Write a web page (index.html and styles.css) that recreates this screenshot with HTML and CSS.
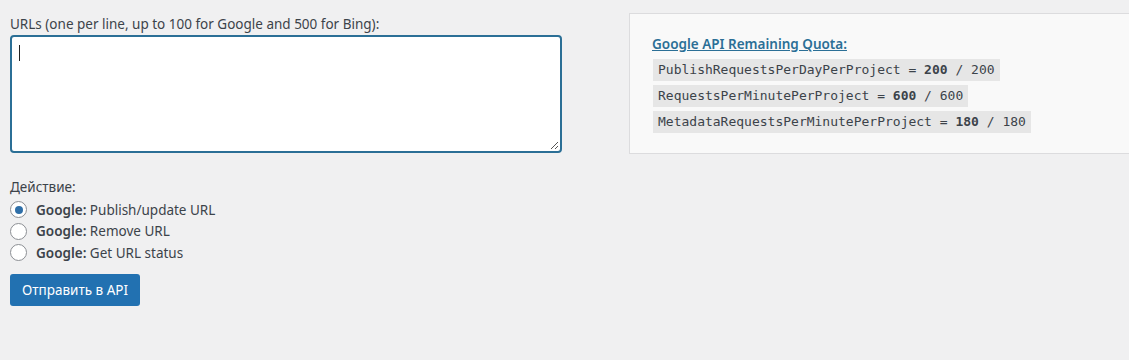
FILE: index.html
```html
<!DOCTYPE html>
<html>
<head>
<meta charset="utf-8">
<link rel="stylesheet" href="styles.css">
</head>
<body>
<div class="wrap">
  <div class="main">
    <label class="lbl" for="urls">URLs (one per line, up to 100 for Google and 500 for Bing):</label>
    <div class="ta-wrap">
      <textarea id="urls" class="urls"></textarea>
      <span class="caret"></span>
      <svg class="grip" width="9" height="9" viewBox="0 0 9 9"><path d="M8 1L1 8M8 5L5 8" stroke="#555" stroke-width="1"/></svg>
    </div>
    <div class="action">
      <div class="lbl">Действие:</div>
      <label class="radio"><span class="dot checked"></span><b>Google:</b>&nbsp;Publish/update URL</label>
      <label class="radio"><span class="dot"></span><b>Google:</b>&nbsp;Remove URL</label>
      <label class="radio"><span class="dot"></span><b>Google:</b>&nbsp;Get URL status</label>
    </div>
    <button class="btn">Отправить в API</button>
  </div>
  <div class="panel">
    <a class="quota" href="#">Google API Remaining Quota:</a>
    <code>PublishRequestsPerDayPerProject = <b>200</b> / 200</code>
    <code>RequestsPerMinutePerProject = <b>600</b> / 600</code>
    <code>MetadataRequestsPerMinutePerProject = <b>180</b> / 180</code>
  </div>
</div>
</body>
</html>
```
FILE: styles.css
```css
html, body { margin: 0; padding: 0; }
body {
  background: #f0f0f1;
  color: #3c434a;
  font-family: "Noto Sans", "Open Sans", sans-serif;
  font-size: 13.5px;
  width: 1129px;
  height: 360px;
  overflow: hidden;
}
.wrap {
  display: flex;
  align-items: flex-start;
  gap: 67px;
  padding: 12px 0 0 10px;
}
.main { width: 552px; display: flex; flex-direction: column; }
.lbl { display: block; line-height: 18px; height: 18px; margin-top: 3px; }
.ta-wrap { position: relative; margin-top: 2px; }
.urls {
  display: block;
  box-sizing: border-box;
  width: 552px;
  height: 118px;
  margin: 0;
  border: 2px solid #2b6f96;
  border-radius: 4px;
  background: #fff;
  resize: none;
  outline: none;
}
.caret {
  position: absolute;
  left: 9px; top: 10px;
  width: 1px; height: 16px;
  background: #222;
}
.grip { position: absolute; right: 3px; bottom: 3px; }
.action { margin-top: 25px; display: flex; flex-direction: column; }
.action .lbl { margin: 0 0 3px; }
.radio {
  display: flex;
  align-items: center;
  height: 21.5px;
  line-height: 20px;
  font-size: 13.5px;
}
.radio b { font-weight: 600; color: #3c434a; }
.dot {
  box-sizing: border-box;
  width: 17px; height: 17px;
  border: 1px solid #8c8f94;
  border-radius: 50%;
  background: #fff;
  margin: 0 9px 0 0;
  display: flex;
  align-items: center;
  justify-content: center;
}
.dot.checked::after {
  content: "";
  width: 8px; height: 8px;
  border-radius: 50%;
  background: #2f6fa8;
}
.btn {
  align-self: flex-start;
  margin-top: 10px;
  width: 130px;
  height: 32px;
  border: 0;
  border-radius: 3px;
  background: #2271b1;
  color: #fff;
  font-family: "Noto Sans", "Open Sans", sans-serif;
  font-size: 13.5px;
  padding: 0;
}
.panel {
  flex: 1;
  box-sizing: border-box;
  height: 141px;
  margin-top: 1px;
  margin-right: -10px;
  background: #f9f9f9;
  border: 1px solid #dcdcde;
  padding: 21px 0 0 22px;
  display: flex;
  flex-direction: column;
  align-items: flex-start;
  gap: 4px;
}
.quota {
  color: #2b6f96;
  font-weight: 600;
  font-size: 13.5px;
  text-decoration: underline;
  line-height: 18px;
  margin-bottom: 2px;
}
code {
  font-family: "DejaVu Sans Mono", "Liberation Mono", monospace;
  font-size: 13px;
  line-height: 14px;
  background: #e6e6e6;
  color: #3c434a;
  padding: 4px 5px 4px 5px;
  margin-left: 1px;
}
code b { font-weight: 700; }
```
